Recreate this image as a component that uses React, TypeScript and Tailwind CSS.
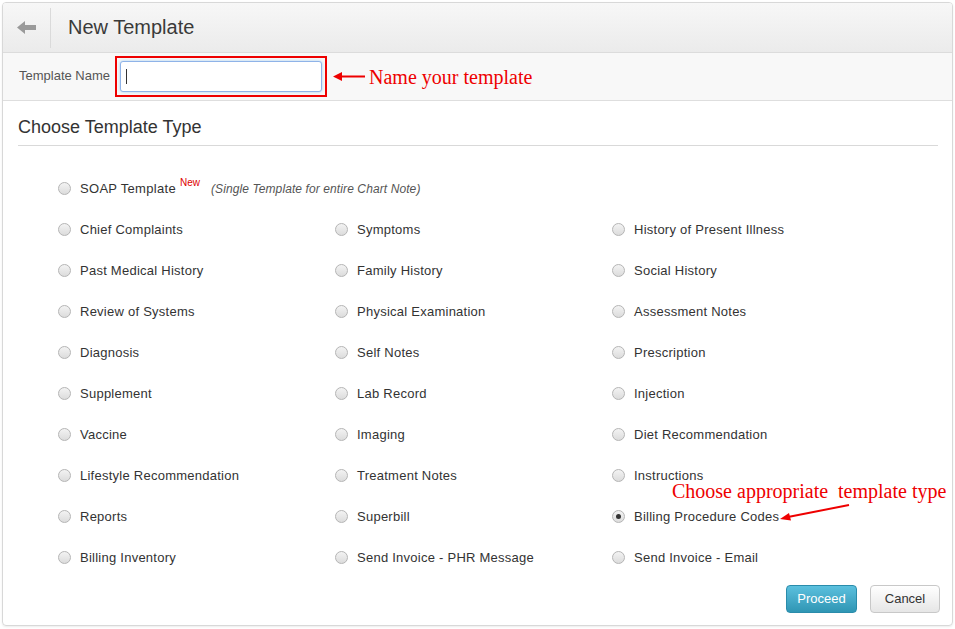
import React from 'react';

const items: string[][] = [
  ['Chief Complaints', 'Symptoms', 'History of Present Illness'],
  ['Past Medical History', 'Family History', 'Social History'],
  ['Review of Systems', 'Physical Examination', 'Assessment Notes'],
  ['Diagnosis', 'Self Notes', 'Prescription'],
  ['Supplement', 'Lab Record', 'Injection'],
  ['Vaccine', 'Imaging', 'Diet Recommendation'],
  ['Lifestyle Recommendation', 'Treatment Notes', 'Instructions'],
  ['Reports', 'Superbill', 'Billing Procedure Codes'],
  ['Billing Inventory', 'Send Invoice - PHR Message', 'Send Invoice - Email'],
];

const Radio: React.FC<{ checked?: boolean }> = ({ checked }) => (
  <span className="w-[13px] h-[13px] rounded-full border border-[#b5b5b5] bg-gradient-to-b from-[#f3f3f3] to-[#dcdcdc] flex items-center justify-center shrink-0">
    {checked && <span className="w-[5px] h-[5px] rounded-full bg-[#333]" />}
  </span>
);

export default function App() {
  return (
    <div className="w-[955px] h-[629px] bg-white pt-[2px] pl-[2px] font-['Liberation_Sans',Arial,sans-serif] text-[#333]">
      <div className="relative w-[951px] border border-[#d8d8d8] rounded-[4px] shadow-[0_1px_2px_rgba(0,0,0,0.08)] overflow-hidden">
        {/* header */}
        <div className="h-[50px] flex items-center bg-gradient-to-b from-[#f7f7f7] to-[#ebebeb] border-b border-[#dcdcdc]">
          <div className="w-[48px] h-[40px] flex items-center justify-center border-r border-[#dadada]">
            <svg width="19" height="13" viewBox="0 0 19 13">
              <polygon points="0,6.5 8,0 8,4 19,4 19,9 8,9 8,13" fill="#9a9a9a" />
            </svg>
          </div>
          <h1 className="ml-[17px] text-[20px] text-[#3a3a3a] leading-none -mt-[2px]">New Template</h1>
        </div>

        {/* name row */}
        <div className="h-[48px] flex items-center bg-[#f8f8f8] border-b border-[#dedede] pl-[16px]">
          <span className="text-[13px] text-[#555] mr-[5px] -mt-[2px]">Template Name</span>
          <div className="border-2 border-[#e00] p-[3px]">
            <div className="w-[202px] h-[31px] bg-white border border-[#8fb3e8] rounded-[3px] shadow-[0_0_3px_rgba(82,168,236,0.5)] flex items-center pl-[5px]">
              <span className="w-px h-[15px] bg-[#333]" />
            </div>
          </div>
          <div className="flex items-center ml-[6px] text-[#e00]">
            <svg width="32" height="9" viewBox="0 0 32 9">
              <polygon points="0,4.5 9,0 9,3.5 32,3.5 32,5.5 9,5.5 9,9" fill="#e00" />
            </svg>
            <span className="ml-[4px] font-['Liberation_Serif','Times_New_Roman',serif] text-[20px]">Name your template</span>
          </div>
        </div>

        {/* body */}
        <div className="pl-[15px] pr-[14px] pt-[16px] pb-[12px]">
          <h2 className="text-[18px] text-[#333] leading-[20px]">Choose Template Type</h2>
          <div className="mt-[8px] border-t border-[#d9d9d9]" />

          <div className="mt-[22px] pl-[40px]">
            <div className="h-[41px] flex items-center">
              <Radio />
              <span className="ml-[9px] text-[13px] tracking-[0.3px]">SOAP Template</span>
              <sup className="ml-[4px] text-[10px] text-[#d00] -mt-[1px]">New</sup>
              <span className="ml-[11px] text-[12px] italic text-[#555] tracking-[0.1px]">(Single Template for entire Chart Note)</span>
            </div>
            {items.map((row, i) => (
              <div key={i} className="grid grid-cols-[277px_277px_277px] h-[41px] items-center">
                {row.map((label) => (
                  <label key={label} className="flex items-center">
                    <Radio checked={label === 'Billing Procedure Codes'} />
                    <span className="ml-[9px] text-[13px] tracking-[0.25px]">{label}</span>
                  </label>
                ))}
              </div>
            ))}
          </div>

          <div className="mt-[7px] flex justify-end gap-[13px] -mr-[2px]">
            <button className="w-[71px] h-[28px] rounded-[4px] border border-[#2a8cab] bg-gradient-to-b from-[#5bc0de] to-[#2f96b4] text-white text-[13px]">
              Proceed
            </button>
            <button className="w-[70px] h-[28px] rounded-[4px] border border-[#c8c8c8] bg-gradient-to-b from-white to-[#e6e6e6] text-[#333] text-[13px]">
              Cancel
            </button>
          </div>
        </div>

        {/* annotation: template type */}
        <span className="absolute left-[669px] top-[478px] font-['Liberation_Serif','Times_New_Roman',serif] text-[20px] text-[#e00] whitespace-pre leading-none">
          Choose appropriate  template type
        </span>
        <svg className="absolute left-[773px] top-[498px]" width="80" height="24" viewBox="0 0 80 24">
          <line x1="73" y1="4" x2="12" y2="16" stroke="#e00" strokeWidth="2" />
          <polygon points="4,18 13,12 15,19.5" fill="#e00" />
        </svg>
      </div>
    </div>
  );
}
